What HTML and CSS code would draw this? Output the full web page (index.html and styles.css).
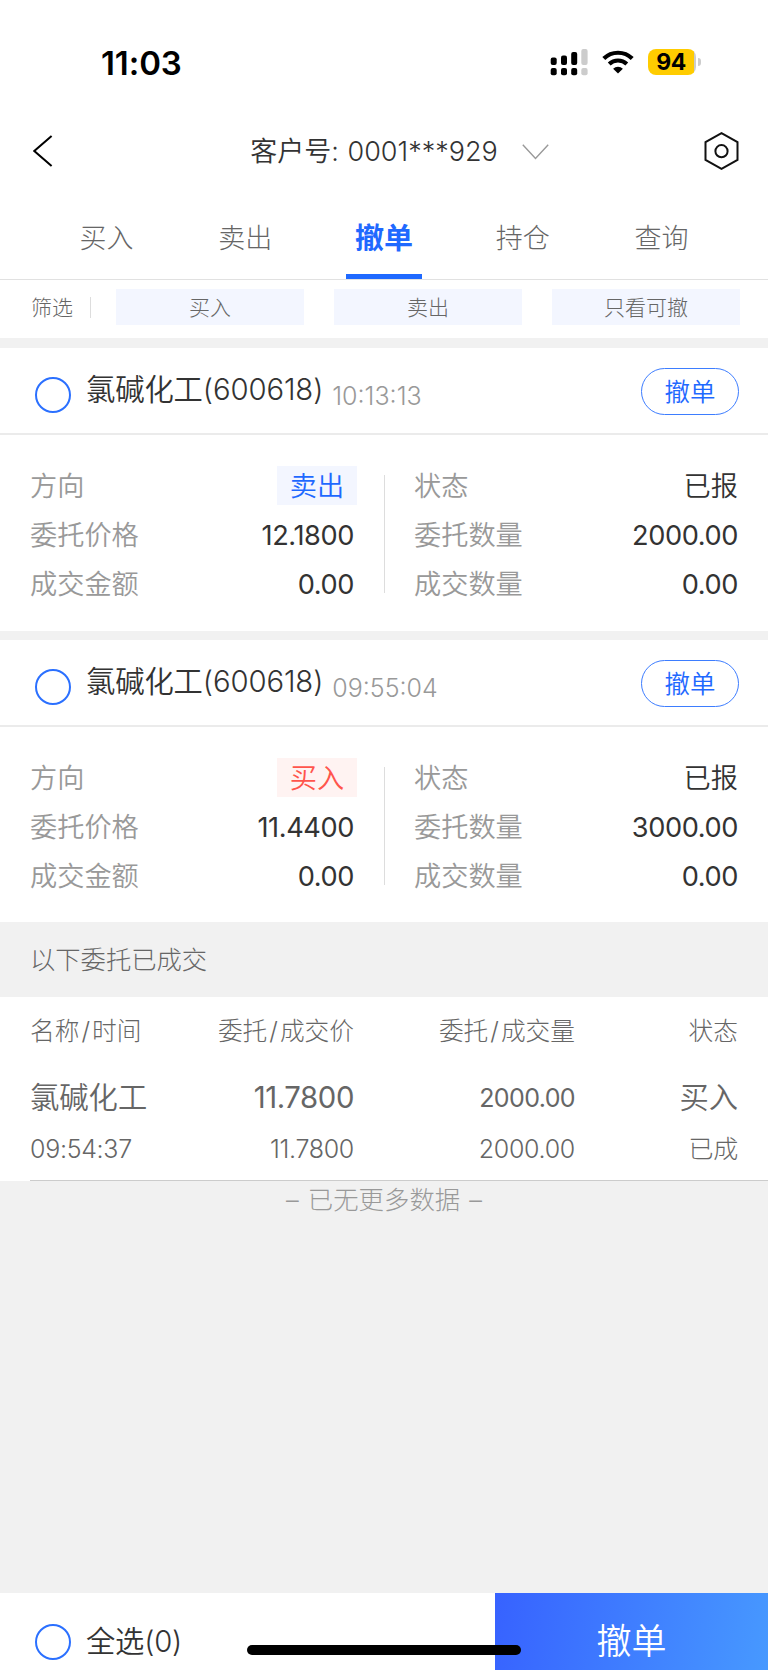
FILE: index.html
```html
<!DOCTYPE html>
<html lang="zh-CN">

<head>
    <meta charset="utf-8">
    <title>撤单</title>
    <link rel="stylesheet" href="styles.css">
</head>

<body>
    <div class="app">
        <div class="status-bar">
            <div class="clock">11:03</div>
            <div class="status-icons">
                <svg class="signal" width="38" height="27" viewBox="0 0 38 27">
                    <rect x="0.7" y="8.5" width="6" height="7.5" rx="2" />
                    <rect x="11" y="6.5" width="6" height="9.5" rx="2" />
                    <rect x="21.2" y="3" width="6" height="13" rx="2" />
                    <rect x="31.3" y="0" width="6.3" height="16" rx="2" fill="#ccc" />
                    <rect x="0.7" y="19" width="6" height="7.3" rx="2" />
                    <rect x="11" y="19" width="6" height="7.3" rx="2" />
                    <rect x="21.2" y="19" width="6" height="7.3" rx="2" />
                    <rect x="31.3" y="19" width="6.3" height="7.3" rx="2" fill="#ccc" />
                </svg>
                <svg class="wifi" width="32" height="24" viewBox="0 0 32 24">
                    <path d="M1.8 8.6a20.2 20.2 0 0 1 28.4 0" fill="none" stroke="#000" stroke-width="4.2" />
                    <path d="M7.2 14a12.6 12.6 0 0 1 17.6 0" fill="none" stroke="#000" stroke-width="4" />
                    <path d="M16 23.6l-4.9-4.9a7 7 0 0 1 9.8 0z" />
                </svg>
                <div class="battery"><span class="level">94</span></div>
                <div class="battery-tip"></div>
            </div>
        </div>

        <div class="nav">
            <svg width="20" height="32" viewBox="0 0 20 32">
                <path d="M18.6 1L1.3 16l17.3 15" fill="none" stroke="#000" stroke-width="2" />
            </svg>
            <div class="account">
                <span>客户号: <span class="number">0001***929</span></span>
                <svg width="27" height="16" viewBox="0 0 27 16">
                    <path d="M.8.8l12.7 13.6L26.2.8" fill="none" stroke="#999" stroke-width="1.4" />
                </svg>
            </div>
            <svg width="35" height="38" viewBox="0 0 35 38">
                <path d="M17.5 1.2l16 8.9v17.8l-16 8.9-16-8.9V10.1z" fill="none" stroke="#111" stroke-width="2" />
                <circle cx="17.5" cy="19.2" r="6.1" fill="none" stroke="#111" stroke-width="2" />
            </svg>
        </div>

        <div class="tabs">
            <div class="tab">买入</div>
            <div class="tab">卖出</div>
            <div class="tab active">撤单</div>
            <div class="tab">持仓</div>
            <div class="tab">查询</div>
        </div>

        <div class="filter">
            <div class="filter-title">筛选</div>
            <div class="filter-item">买入</div>
            <div class="filter-item">卖出</div>
            <div class="filter-item">只看可撤</div>
        </div>

        <div class="order">
            <div class="order-head">
                <span class="radio"></span>
                <span class="stock">氯碱化工(600618)</span>
                <span class="time">10:13:13</span>
                <span class="cancel">撤单</span>
            </div>
            <div class="order-body">
                <div class="col">
                    <div class="row"><span>方向</span><span class="tag sell">卖出</span></div>
                    <div class="row"><span>委托价格</span><span class="val num">12.1800</span></div>
                    <div class="row"><span>成交金额</span><span class="val num">0.00</span></div>
                </div>
                <div class="col">
                    <div class="row"><span>状态</span><span class="val">已报</span></div>
                    <div class="row"><span>委托数量</span><span class="val num">2000.00</span></div>
                    <div class="row"><span>成交数量</span><span class="val num">0.00</span></div>
                </div>
            </div>
        </div>

        <div class="order last">
            <div class="order-head">
                <span class="radio"></span>
                <span class="stock">氯碱化工(600618)</span>
                <span class="time">09:55:04</span>
                <span class="cancel">撤单</span>
            </div>
            <div class="order-body">
                <div class="col">
                    <div class="row"><span>方向</span><span class="tag buy">买入</span></div>
                    <div class="row"><span>委托价格</span><span class="val num">11.4400</span></div>
                    <div class="row"><span>成交金额</span><span class="val num">0.00</span></div>
                </div>
                <div class="col">
                    <div class="row"><span>状态</span><span class="val">已报</span></div>
                    <div class="row"><span>委托数量</span><span class="val num">3000.00</span></div>
                    <div class="row"><span>成交数量</span><span class="val num">0.00</span></div>
                </div>
            </div>
        </div>

        <div class="section-title">以下委托已成交</div>

        <div class="deals">
            <div class="deal-row deal-head">
                <span>名称<i>/</i>时间</span><span>委托<i>/</i>成交价</span><span>委托<i>/</i>成交量</span><span>状态</span>
            </div>
            <div class="deal">
                <div class="deal-row deal-main">
                    <span>氯碱化工</span><span class="num">11.7800</span><span class="num amount">2000.00</span><span>买入</span>
                </div>
                <div class="deal-row deal-sub">
                    <span>09:54:37</span><span>11.7800</span><span>2000.00</span><span>已成</span>
                </div>
            </div>
        </div>

        <div class="no-more">– 已无更多数据 –</div>

        <div class="footer">
            <div class="select-all"><span class="radio"></span><span>全选(0)</span></div>
            <div class="submit">撤单</div>
            <div class="home-bar"></div>
        </div>
    </div>
</body>

</html>
```
FILE: styles.css
```css
* {
    box-sizing: border-box;
}

body {
    margin: 0;
    background: #f1f1f1;
    color: #333;
    font-family: Inter, "Noto Sans CJK SC", sans-serif;
    font-weight: 300;
    font-size: 27px;
    line-height: 40px;
    white-space: nowrap;
}

.app {
    width: 768px;
    height: 1670px;
    display: flex;
    flex-direction: column;
    overflow: hidden;
}

svg {
    display: block;
    flex: none;
}

/* status bar */
.status-bar {
    height: 104px;
    padding: 20px 67px 0 101px;
    background: #fff;
    color: #000;
    display: flex;
    justify-content: space-between;
    align-items: center;
}

.clock {
    padding-top: 2px;
    font-size: 33px;
    font-weight: 600;
    letter-spacing: -0.1px;
}

.status-icons {
    display: flex;
    align-items: center;
}

.wifi {
    margin: 0 14px 0 14px;
}

.battery {
    width: 48px;
    height: 26px;
    border-radius: 8px;
    background: linear-gradient(90deg, #fc0 46px, #ccc 46px);
    text-align: center;
}

.level {
    display: block;
    width: 46px;
    font-size: 23px;
    font-weight: 700;
    line-height: 27px;
    letter-spacing: -0.5px;
}

.battery-tip {
    width: 3px;
    height: 8px;
    margin-left: 2px;
    border-radius: 0 4px 4px 0;
    background: #ccc;
}

/* title */
.nav {
    height: 96px;
    padding: 0 29px 2px 33px;
    background: #fff;
    display: flex;
    justify-content: space-between;
    align-items: center;
}

.account {
    display: flex;
    align-items: center;
    gap: 24px;
    margin: 2px 0 0 42px;
    font-weight: 350;
}

.number {
    margin-left: 1px;
}

.tabs {
    height: 80px;
    padding: 0 37px;
    background: #fff;
    border-bottom: 1px solid #e1e1e1;
    display: flex;
}

.tab {
    flex: 1;
    display: flex;
    flex-direction: column;
    align-items: center;
    padding-top: 19px;
    color: #666;
}

.active {
    color: #1f69ff;
    font-size: 29px;
    font-weight: 700;
}

.active::after {
    content: "";
    width: 76px;
    height: 5px;
    margin-top: 15px;
    background: #1f69ff;
}

.filter {
    height: 58px;
    padding: 9px 28px 13px 31px;
    background: #fff;
    color: #666;
    font-size: 21px;
    line-height: 38px;
    display: flex;
    gap: 30px;
}

.filter-title {
    align-self: center;
    width: 60px;
    margin-right: -5px;
    line-height: 21px;
    border-right: 1px solid #ddd;
}

.filter-item {
    flex: 1;
    background: #f3f6ff;
    text-align: center;
}

/* orders */
.order {
    height: 293px;
    border-top: 10px solid #f1f1f1;
    background: #fff;
}

.last {
    height: 291px;
    border-top-width: 9px;
}

.order-head {
    height: 87px;
    padding: 0 29px 0 35px;
    border-bottom: 2px solid #ebebeb;
    display: flex;
    align-items: center;
}

.radio {
    width: 36px;
    height: 36px;
    border: 2px solid #2b70ff;
    border-radius: 50%;
}

.order-head .radio {
    margin-top: 9px;
}

.stock {
    margin: -2px 0 0 15px;
    font-size: 29.3px;
    font-weight: 350;
    letter-spacing: -0.1px;
}

.time {
    margin: 10px 0 0 9px;
    color: #999;
    font-size: 25px;
}

.cancel {
    width: 98px;
    height: 47px;
    margin: 2px 0 0 auto;
    border: 1px solid #3d7dff;
    border-radius: 24px;
    color: #1f69ff;
    font-size: 25.5px;
    font-weight: 350;
    line-height: 45px;
    text-align: center;
}

.order-body {
    padding-top: 27px;
    display: grid;
    grid-template-columns: 354px 324px;
    column-gap: 60px;
}

.col {
    padding-left: 30px;
    color: #999;
    font-size: 27.2px;
    font-weight: 350;
}

.col + .col {
    position: relative;
    padding-left: 0;
}

/* line between the two columns */
.col + .col::before {
    content: "";
    position: absolute;
    left: -30px;
    top: 13px;
    width: 1px;
    height: 118px;
    background: #ddd;
}

.row {
    height: 49px;
    display: flex;
    justify-content: space-between;
    align-items: center;
}

.val {
    color: #333;
}

.num {
    font-weight: 400;
    letter-spacing: -0.4px;
}

.tag {
    width: 80px;
    height: 39px;
    margin: -2px -3px 0 0;
    line-height: 41px;
    text-align: center;
}

.sell {
    background: #f3f6ff;
    color: #1f69ff;
}

.buy {
    background: #fff3f2;
    color: #ff554c;
}

/* finished deals */
.section-title {
    height: 75px;
    padding-left: 30px;
    color: #666;
    font-size: 25.3px;
    line-height: 76px;
}

.deals {
    height: 184px;
    background: #fff;
    color: #666;
}

.deal-row {
    display: grid;
    grid-template-columns: 154px 170px 221px 163px;
    align-items: center;
    text-align: right;
    height: 51px;
}

.deal-row span:first-child {
    text-align: left;
}

.deal-head {
    height: 69px;
    padding: 0 0 2px 30px;
    font-size: 24.7px;
}

.deal-head i {
    padding: 0 2px;
    font-style: normal;
}

.deal {
    margin-left: 30px;
    height: 115px;
    padding-top: 6px;
    border-bottom: 1px solid #ccc;
}

.deal-main {
    font-size: 29.3px;
    font-weight: 350;
}

.amount,
.deal-sub {
    font-size: 25px;
    letter-spacing: -0.3px;
}

.amount {
    letter-spacing: -0.6px;
}

.no-more {
    flex: 1;
    color: #999;
    font-size: 25.4px;
    line-height: 38px;
    text-align: center;
    word-spacing: 2px;
}

.footer {
    position: relative;
    height: 77px;
    background: #fff;
    display: flex;
}

.select-all {
    flex: 1;
    padding: 21px 0 0 35px;
    display: flex;
    gap: 15px;
    align-items: center;
    font-size: 29.3px;
    font-weight: 350;
    letter-spacing: -0.2px;
}

.submit {
    width: 273px;
    padding-top: 28px;
    background: linear-gradient(100deg, #3762ff, #4799ff);
    color: #fff;
    font-size: 35px;
    font-weight: 350;
    text-align: center;
}

.home-bar {
    position: absolute;
    left: 247px;
    bottom: 15px;
    width: 274px;
    height: 10px;
    border-radius: 5px;
    background: #000;
}
```
